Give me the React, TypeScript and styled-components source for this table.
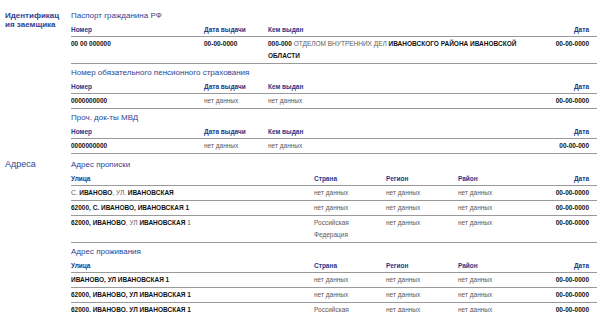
import styled, { createGlobalStyle } from 'styled-components';

const GlobalStyle = createGlobalStyle`
    body {
        margin: 0;
        background: #ffffff;
        font-family: 'Liberation Sans', Arial, sans-serif;
    }
`;

interface Cell {
    strong?: string;
    light?: string;
    parts?: { text: string; bold?: boolean }[];
}

interface Table {
    title: string;
    kind: 'doc' | 'addr';
    rows: Cell[][];
}

interface Group {
    label: string;
    labelBold?: boolean;
    tables: Table[];
}

const docHead = ['Номер', 'Дата выдачи', 'Кем выдан', 'Дата'];
const addrHead = ['Улица', 'Страна', 'Регион', 'Район', 'Дата'];

const none: Cell = { light: 'нет данных' };
const date: Cell = { strong: '00-00-0000' };
const rf: Cell = { light: 'Российская Федерация' };

const groups: Group[] = [
    {
        label: 'Идентификация заемщика',
        labelBold: true,
        tables: [
            {
                title: 'Паспорт гражданина РФ',
                kind: 'doc',
                rows: [
                    [
                        { strong: '00 00 000000' },
                        { strong: '00-00-0000' },
                        {
                            parts: [
                                { text: '000-000', bold: true },
                                { text: ' ОТДЕЛОМ ВНУТРЕННИХ ДЕЛ ' },
                                { text: 'ИВАНОВСКОГО РАЙОНА ИВАНОВСКОЙ ОБЛАСТИ', bold: true },
                            ],
                        },
                        date,
                    ],
                ],
            },
            {
                title: 'Номер обязательного пенсионного страхования',
                kind: 'doc',
                rows: [[{ strong: '0000000000' }, none, none, date]],
            },
            {
                title: 'Проч. док-ты МВД',
                kind: 'doc',
                rows: [[{ strong: '0000000000' }, none, none, { strong: '00-00-000' }]],
            },
        ],
    },
    {
        label: 'Адреса',
        tables: [
            {
                title: 'Адрес прописки',
                kind: 'addr',
                rows: [
                    [
                        {
                            parts: [
                                { text: 'С. ' },
                                { text: 'ИВАНОВО', bold: true },
                                { text: ', УЛ. ' },
                                { text: 'ИВАНОВСКАЯ', bold: true },
                            ],
                        },
                        none, none, none, date,
                    ],
                    [{ strong: '62000, С. ИВАНОВО, ИВАНОВСКАЯ 1' }, none, none, none, date],
                    [
                        {
                            parts: [
                                { text: '62000, ИВАНОВО', bold: true },
                                { text: ', УЛ ' },
                                { text: 'ИВАНОВСКАЯ', bold: true },
                                { text: ' 1' },
                            ],
                        },
                        rf, none, none, date,
                    ],
                ],
            },
            {
                title: 'Адрес проживания',
                kind: 'addr',
                rows: [
                    [{ strong: 'ИВАНОВО, УЛ ИВАНОВСКАЯ 1' }, none, none, none, date],
                    [{ strong: '62000, ИВАНОВО, УЛ ИВАНОВСКАЯ 1' }, none, none, none, date],
                    [{ strong: '62000, ИВАНОВО, УЛ ИВАНОВСКАЯ 1' }, rf, none, none, date],
                ],
            },
        ],
    },
];

function CellText({ cell }: { cell: Cell }) {
    if (cell.parts) {
        return (
            <>
                {cell.parts.map((p, i) =>
                    p.bold ? <Strong key={i}>{p.text}</Strong> : <Light key={i}>{p.text}</Light>
                )}
            </>
        );
    }
    if (cell.strong) return <Strong>{cell.strong}</Strong>;
    return <Light>{cell.light}</Light>;
}

export default function App() {
    return (
        <>
            <GlobalStyle />
            <Page>
                {groups.map((group) => (
                    <GroupRow key={group.label}>
                        <GroupLabel $bold={group.labelBold}>{group.label}</GroupLabel>
                        <Tables>
                            {group.tables.map((table) => {
                                const head = table.kind === 'doc' ? docHead : addrHead;
                                return (
                                    <Section key={table.title}>
                                        <SectionTitle>{table.title}</SectionTitle>
                                        <Row $kind={table.kind} $head>
                                            {head.map((h) => (
                                                <HeadCell key={h}>{h}</HeadCell>
                                            ))}
                                        </Row>
                                        {table.rows.map((row, ri) => (
                                            <Row key={ri} $kind={table.kind}>
                                                {row.map((cell, ci) => (
                                                    <DataCell key={ci}>
                                                        <CellText cell={cell} />
                                                    </DataCell>
                                                ))}
                                            </Row>
                                        ))}
                                    </Section>
                                );
                            })}
                        </Tables>
                    </GroupRow>
                ))}
            </Page>
        </>
    );
}

const Page = styled.div`
    width: 600px;
    padding: 9px 3px 0 5px;
    box-sizing: border-box;
    display: flex;
    flex-direction: column;
    gap: 4px;
`;
const GroupRow = styled.div`
    display: grid;
    grid-template-columns: 66px 1fr;
`;
const GroupLabel = styled.div<{ $bold?: boolean }>`
    padding-top: 2px;
    padding-right: 8px;
    color: #2b4496;
    font-size: ${(p) => (p.$bold ? '8px' : '9px')};
    font-weight: ${(p) => (p.$bold ? 700 : 400)};
    line-height: 9px;
    word-break: break-all;
`;
const Tables = styled.div`
    display: flex;
    flex-direction: column;
    gap: 2px;
`;
const Section = styled.div`
    display: flex;
    flex-direction: column;
`;
const SectionTitle = styled.div`
    color: #2b4496;
    font-size: 8px;
    line-height: 14px;
`;
const Row = styled.div<{ $kind: 'doc' | 'addr'; $head?: boolean }>`
    display: grid;
    grid-template-columns: ${(p) =>
        p.$kind === 'doc' ? '133px 64px 260px 1fr' : '243px 72px 72px 72px 1fr'};
    align-items: start;
    border-bottom: 1px solid #9a9a9a;
    padding: ${(p) => (p.$head ? '1px 8px 0 0' : '1px 8px 1px 0')};
    line-height: 12px;
`;
const HeadCell = styled.div`
    color: #22388a;
    font-size: 6.5px;
    font-weight: 700;
    &:last-child {
        text-align: right;
    }
`;
const DataCell = styled.div`
    font-size: 6.5px;
    padding-right: 6px;
    &:last-child {
        text-align: right;
        padding-right: 0;
    }
`;
const Strong = styled.span`
    color: #111111;
    font-weight: 700;
`;
const Light = styled.span`
    color: #5a5a5a;
    font-weight: 400;
`;
